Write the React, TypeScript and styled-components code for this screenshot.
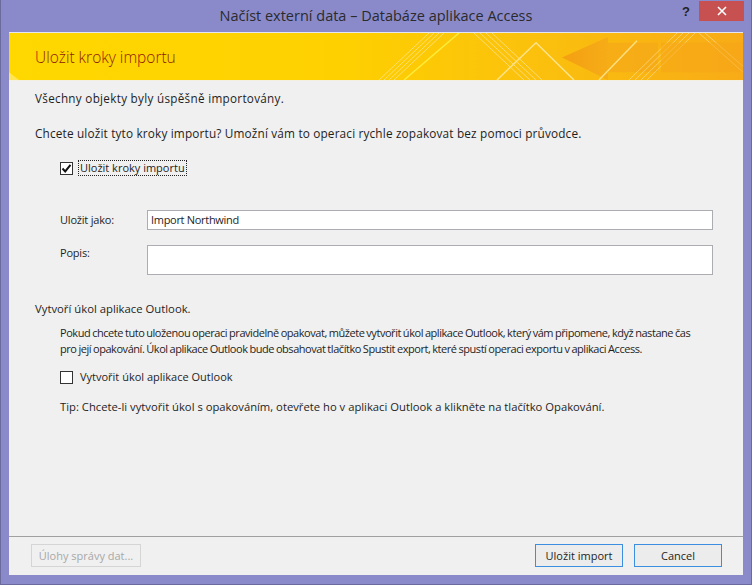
import React from 'react';
import styled, { createGlobalStyle } from 'styled-components';

const GlobalStyle = createGlobalStyle`
  html, body {
    margin: 0;
    padding: 0;
    background: #8a8acb;
  }
  * {
    box-sizing: border-box;
  }
`;

const Window = styled.div`
  width: 752px;
  height: 585px;
  background: #8a8acb;
  border: 1px solid #6a6a9c;
  border-top: none;
  display: flex;
  flex-direction: column;
  font-family: 'Open Sans', 'Liberation Sans', sans-serif;
  color: #1e1e1e;
`;

const TitleBar = styled.div`
  position: relative;
  height: 32px;
  display: flex;
  align-items: center;
  justify-content: center;
  flex-shrink: 0;
`;

const TitleText = styled.div`
  font-size: 14.5px;
  color: #2b2b2b;
  margin-top: -1px;
`;

const TitleButtons = styled.div`
  position: absolute;
  top: 1px;
  right: 7px;
  display: flex;
  align-items: flex-start;
`;

const HelpButton = styled.div`
  width: 26px;
  height: 20px;
  display: flex;
  align-items: center;
  justify-content: center;
  font-family: 'Liberation Sans', sans-serif;
  font-weight: bold;
  font-size: 13px;
  color: #222;
`;

const CloseButton = styled.div`
  width: 45px;
  height: 20px;
  background: #c75050;
  display: flex;
  align-items: center;
  justify-content: center;
`;

const Client = styled.div`
  flex: 1;
  margin: 0 8px 9px 8px;
  background: #f0f0f0;
  display: flex;
  flex-direction: column;
  border-top: 1px solid #e6e6f2;
`;

const Banner = styled.div`
  position: relative;
  height: 48px;
  flex-shrink: 0;
  display: flex;
  align-items: center;
  padding-left: 26px;
  overflow: hidden;
  border-bottom: 1px solid #f4f0e0;
`;

const BannerArt = styled.svg`
  position: absolute;
  inset: 0;
  width: 100%;
  height: 100%;
`;

const BannerTitle = styled.div`
  position: relative;
  font-size: 15.5px;
  font-weight: 300;
  color: #8a2200;
  margin-top: 1px;
`;

const Body = styled.div`
  flex: 1;
  padding: 9px 30px 0 26px;
  display: flex;
  flex-direction: column;
  font-size: 11px;
`;

const Line = styled.div<{ $mt: number; $indent?: boolean; $size?: number; $ls?: number }>`
  line-height: 16px;
  font-size: ${p => p.$size ?? 11}px;
  letter-spacing: ${p => p.$ls ?? 0}px;
  margin-top: ${p => p.$mt}px;
  padding-left: ${p => (p.$indent ? 25 : 0)}px;
  white-space: nowrap;
`;

const Paragraph = styled.div<{ $mt: number }>`
  line-height: 16px;
  margin-top: ${p => p.$mt}px;
  padding-left: 25px;
  font-size: 11px;
  letter-spacing: -0.45px;
  word-spacing: -0.5px;
`;

const CheckRow = styled.label<{ $mt: number }>`
  display: flex;
  align-items: center;
  gap: 5px;
  height: 16px;
  margin-top: ${p => p.$mt}px;
  padding-left: 25px;
`;

const Box = styled.span`
  width: 13px;
  height: 13px;
  border: 1px solid #333;
  background: #fff;
  display: flex;
  align-items: center;
  justify-content: center;
  flex-shrink: 0;
`;

const CheckLabel = styled.span<{ $focused?: boolean }>`
  padding: 0 1px;
  line-height: 14px;
  border: 1px dotted ${p => (p.$focused ? '#222' : 'transparent')};
`;

const FieldRow = styled.div<{ $mt: number }>`
  display: grid;
  grid-template-columns: 87px 1fr;
  align-items: start;
  margin-top: ${p => p.$mt}px;
  padding-left: 25px;
`;

const FieldLabel = styled.div<{ $pt: number }>`
  padding-top: ${p => p.$pt}px;
  line-height: 16px;
  letter-spacing: -0.2px;
`;

const Input = styled.div<{ $h: number }>`
  height: ${p => p.$h}px;
  background: #fff;
  border: 1px solid #abadb3;
  padding: 1px 3px;
  line-height: 16px;
  font-size: 11px;
  letter-spacing: -0.3px;
`;

const Footer = styled.div`
  height: 39px;
  flex-shrink: 0;
  border-top: 1px solid #a0a0a0;
  display: flex;
  align-items: flex-start;
  padding: 7px 21px 0 22px;
`;

const Button = styled.div<{ $disabled?: boolean; $w: number; $ml?: number }>`
  width: ${p => p.$w}px;
  height: 23px;
  margin-left: ${p => p.$ml ?? 0}px;
  display: flex;
  align-items: center;
  justify-content: center;
  font-size: 11px;
  background: ${p => (p.$disabled ? '#f0f0f0' : '#ececec')};
  border: 1px solid ${p => (p.$disabled ? '#d5d5d5' : '#3c8fe0')};
  color: ${p => (p.$disabled ? '#a8a8a8' : '#1e1e1e')};
`;

const Spacer = styled.div`
  flex: 1;
`;

const Check = () => (
  <svg width="11" height="11" viewBox="0 0 11 11">
    <path d="M1.5 5.5 L4.2 8.4 L9.5 1.8" fill="none" stroke="#111" strokeWidth="2" />
  </svg>
);

const BannerDecoration = () => (
  <BannerArt viewBox="0 0 734 48" preserveAspectRatio="none">
    <defs>
      <linearGradient id="bg" x1="0" y1="0" x2="1" y2="0">
        <stop offset="0" stopColor="#ffd800" />
        <stop offset="0.45" stopColor="#fed000" />
        <stop offset="0.7" stopColor="#fbc20c" />
        <stop offset="1" stopColor="#f8ab17" />
      </linearGradient>
      <linearGradient id="arrow" x1="0" y1="0" x2="1" y2="0">
        <stop offset="0" stopColor="#f39a12" />
        <stop offset="1" stopColor="#f5aa18" />
      </linearGradient>
    </defs>
    <rect width="734" height="48" fill="url(#bg)" />
    <polygon points="0,40 0,48 10,48" fill="#ffe97a" opacity="0.7" />
    <g stroke="#ffe9a0" strokeWidth="1" opacity="0.7">
      <line x1="370" y1="48" x2="420" y2="0" />
      <line x1="375" y1="48" x2="425" y2="0" />
      <line x1="380" y1="48" x2="430" y2="0" />
      <line x1="385" y1="48" x2="435" y2="0" />
    </g>
    <line x1="395" y1="48" x2="450" y2="0" stroke="#ffec3a" strokeWidth="1.5" />
    <g stroke="#ffe49a" strokeWidth="1" opacity="0.75">
      <line x1="465" y1="0" x2="515" y2="48" />
      <line x1="471" y1="0" x2="521" y2="48" />
      <line x1="477" y1="0" x2="527" y2="48" />
      <line x1="483" y1="0" x2="533" y2="48" />
    </g>
    <polyline points="488,48 527,10 565,48" fill="none" stroke="#ffe38a" strokeWidth="1.5" />
    <polygon points="553,25 599,4 599,48" fill="url(#arrow)" opacity="0.85" />
    <rect x="599" y="10" width="50" height="30" fill="#f5a818" opacity="0.7" />
    <line x1="590" y1="48" x2="628" y2="8" stroke="#ffe080" strokeWidth="1.5" />
    <g stroke="#ffe4a0" strokeWidth="1" opacity="0.6">
      <line x1="620" y1="48" x2="668" y2="0" />
      <line x1="626" y1="48" x2="674" y2="0" />
      <line x1="632" y1="48" x2="680" y2="0" />
      <line x1="638" y1="48" x2="686" y2="0" />
      <line x1="690" y1="0" x2="734" y2="40" />
      <line x1="696" y1="0" x2="734" y2="34" />
    </g>
    <rect x="652" y="10" width="82" height="30" fill="#f6a418" opacity="0.5" />
  </BannerArt>
);

export default function App() {
  return (
    <>
      <GlobalStyle />
      <Window>
        <TitleBar>
          <TitleText>Načíst externí data – Databáze aplikace Access</TitleText>
          <TitleButtons>
            <HelpButton>?</HelpButton>
            <CloseButton>
              <svg width="10" height="10" viewBox="0 0 10 10">
                <path d="M1 1 L9 9 M9 1 L1 9" stroke="#fff" strokeWidth="1.6" />
              </svg>
            </CloseButton>
          </TitleButtons>
        </TitleBar>
        <Client>
          <Banner>
            <BannerDecoration />
            <BannerTitle>Uložit kroky importu</BannerTitle>
          </Banner>
          <Body>
            <Line $mt={0} $size={11.7} $ls={0.3}>
              Všechny objekty byly úspěšně importovány.
            </Line>
            <Line $mt={19} $size={11.8} $ls={0.16}>
              Chcete uložit tyto kroky importu? Umožní vám to operaci rychle zopakovat bez pomoci průvodce.
            </Line>
            <CheckRow $mt={19}>
              <Box>
                <Check />
              </Box>
              <CheckLabel $focused>Uložit kroky importu</CheckLabel>
            </CheckRow>
            <FieldRow $mt={34}>
              <FieldLabel $pt={2}>Uložit jako:</FieldLabel>
              <Input $h={20}>Import Northwind</Input>
            </FieldRow>
            <FieldRow $mt={15}>
              <FieldLabel $pt={0}>Popis:</FieldLabel>
              <Input $h={30} />
            </FieldRow>
            <Line $mt={26} $size={11.3}>
              Vytvoří úkol aplikace Outlook.
            </Line>
            <Paragraph $mt={8}>
              Pokud chcete tuto uloženou operaci pravidelně opakovat, můžete vytvořit úkol aplikace Outlook, který vám
              připomene, když nastane čas
              <br />
              pro její opakování. Úkol aplikace Outlook bude obsahovat tlačítko Spustit export, které spustí operaci
              exportu v aplikaci Access.
            </Paragraph>
            <CheckRow $mt={12}>
              <Box />
              <CheckLabel>Vytvořit úkol aplikace Outlook</CheckLabel>
            </CheckRow>
            <Line $mt={14} $indent $size={11.25}>
              Tip: Chcete-li vytvořit úkol s opakováním, otevřete ho v aplikaci Outlook a klikněte na tlačítko
              Opakování.
            </Line>
          </Body>
          <Footer>
            <Button $disabled $w={110}>
              Úlohy správy dat...
            </Button>
            <Spacer />
            <Button $w={88}>Uložit import</Button>
            <Button $w={88} $ml={11}>
              Cancel
            </Button>
          </Footer>
        </Client>
      </Window>
    </>
  );
}
